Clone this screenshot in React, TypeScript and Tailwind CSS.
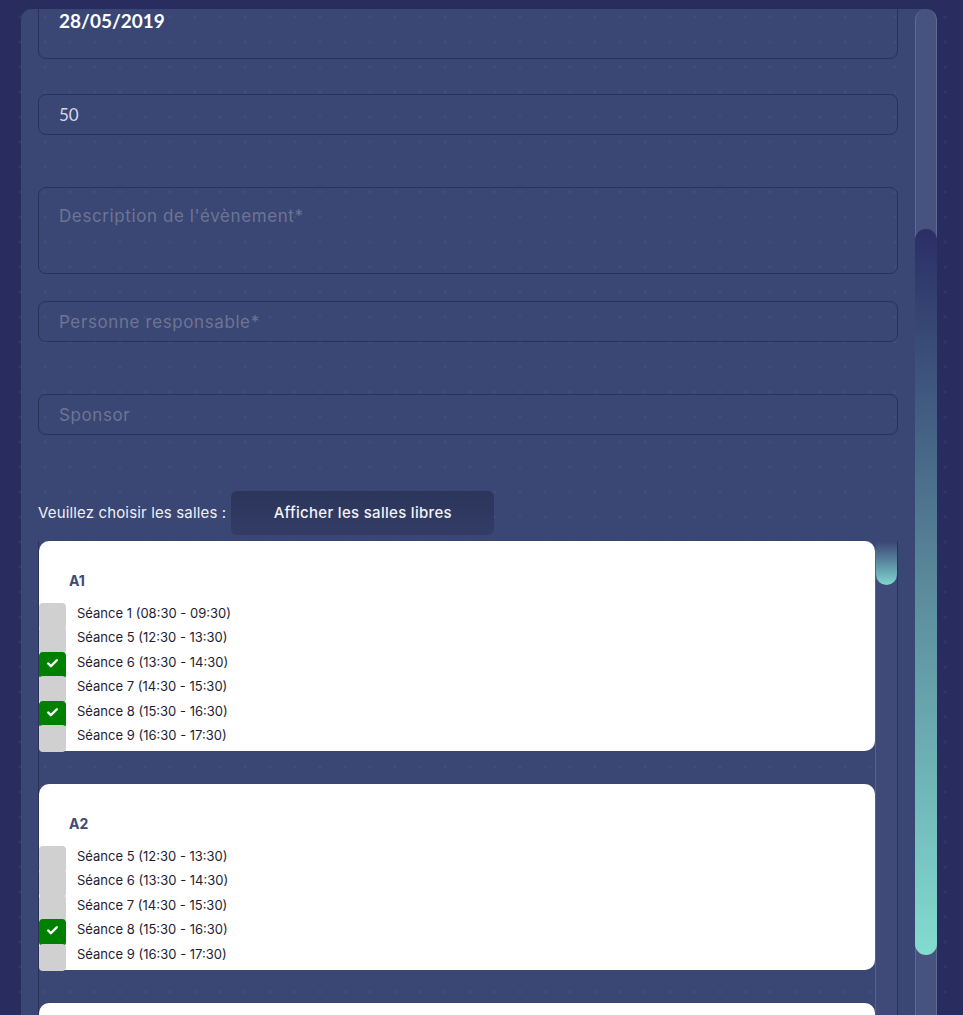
import { Check } from 'lucide-react';

const sans = "font-['Inter','Noto_Sans',sans-serif]";
const lato = "font-['Lato','Liberation_Sans',sans-serif]";

interface Slot {
  n: number;
  from: string;
  to: string;
  on?: boolean;
}

const rooms: { name: string; slots: Slot[] }[] = [
  {
    name: 'A1',
    slots: [
      { n: 1, from: '08:30', to: '09:30' },
      { n: 5, from: '12:30', to: '13:30' },
      { n: 6, from: '13:30', to: '14:30', on: true },
      { n: 7, from: '14:30', to: '15:30' },
      { n: 8, from: '15:30', to: '16:30', on: true },
      { n: 9, from: '16:30', to: '17:30' },
    ],
  },
  {
    name: 'A2',
    slots: [
      { n: 5, from: '12:30', to: '13:30' },
      { n: 6, from: '13:30', to: '14:30' },
      { n: 7, from: '14:30', to: '15:30' },
      { n: 8, from: '15:30', to: '16:30', on: true },
      { n: 9, from: '16:30', to: '17:30' },
    ],
  },
];

const RoomCard = ({ name, slots }: { name: string; slots: Slot[] }) => (
  <div className="rounded-[10px] bg-white pt-[30px] pb-[3px]">
    <div className={`${sans} pl-[30px] text-[14px] leading-[20px] font-bold text-[#3d4a75]`}>{name}</div>
    <div className="mt-[10px] flex flex-col">
      {slots.map((s) => (
        <div key={s.n} className="flex h-[24.5px] items-center">
          <span
            className={`mt-[6px] flex h-[27px] w-[27px] shrink-0 items-center justify-center rounded-[4px] ${
              s.on ? 'bg-[#008000]' : 'bg-[#d0d0d0]'
            }`}>
            {s.on && <Check size={13} strokeWidth={4.5} className="mb-[4px] text-white" />}
          </span>
          <span className={`${sans} ml-[11px] text-[13px] text-[#1d1d33]`}>
            Séance {s.n} ({s.from} - {s.to})
          </span>
        </div>
      ))}
    </div>
  </div>
);

const Field = ({ label, className }: { label: string; className: string }) => (
  <div className={`rounded-[8px] border border-[#2b3259] px-[20px] ${className}`}>
    <span className={`${sans} text-[17px] leading-[24px] tracking-[0.6px] text-[#6d7594]`}>{label}</span>
  </div>
);

export default function App() {
  return (
    <div className="h-[1015px] w-[963px] overflow-hidden bg-[#292c5f] bg-[radial-gradient(circle,rgba(255,255,255,0.06)_1px,transparent_1.6px)] bg-[length:25px_25px] bg-[position:7.5px_4.5px] bg-fixed">
      <div className="mt-[9px] ml-[21px] flex h-[1006px] w-[916px] overflow-hidden rounded-t-[10px] bg-[#3a4673] bg-[radial-gradient(circle,rgba(255,255,255,0.05)_1px,transparent_1.6px)] bg-[length:25px_25px] bg-[position:7.5px_4.5px] bg-fixed">
        <div className="flex-1 px-[17px]">
          <div className="-mt-[19px] h-[69px] rounded-[8px] border border-[#2b3259] px-[20px] pt-[18px]">
            <span className={`${lato} text-[19px] leading-[24px] font-bold text-white`}>28/05/2019</span>
          </div>
          <div className="mt-[35px] flex h-[41px] items-center rounded-[8px] border border-[#2b3259] px-[20px]">
            <span className={`${lato} text-[17px] text-[#d6d9e4]`}>50</span>
          </div>
          <Field label="Description de l'évènement*" className="mt-[52px] h-[87px] pt-[16px]" />
          <Field label="Personne responsable*" className="mt-[27px] flex h-[41px] items-center" />
          <Field label="Sponsor" className="mt-[52px] flex h-[41px] items-center" />

          <div className="mt-[56px] flex h-[44px] items-center">
            <span className={`${sans} text-[15px] tracking-[0.15px] text-[#eef0f6]`}>Veuillez choisir les salles :</span>
            <button
              className={`${sans} ml-[5px] h-[44px] w-[263px] rounded-[6px] bg-linear-to-b from-[#2c355a] to-[#323c66] text-[15px] font-medium tracking-[0.3px] text-[#f2f3f8]`}>
              Afficher les salles libres
            </button>
          </div>

          <div className="mt-[6px] flex border-r border-l border-[#2b3259]">
            <div className="flex flex-1 flex-col gap-[33px]">
              {rooms.map((r) => (
                <RoomCard key={r.name} name={r.name} slots={r.slots} />
              ))}
              <div className="h-[120px] rounded-[10px] bg-white" />
            </div>
            <div className="w-[22px] rounded-t-[10px] border-l border-[#56618c] bg-[#3f4a78]">
              <div className="h-[44px] rounded-t-[8px] rounded-b-full bg-linear-to-b from-[#3a4474] to-[#7fd8cf]" />
            </div>
          </div>
        </div>

        <div className="w-[22px] shrink-0 rounded-t-full border-x border-[#5f6a93] bg-[#47527e]">
          <div className="-mx-px mt-[220px] h-[726px] rounded-full bg-linear-to-b from-[#2b2e66] via-[#5b8c9c] to-[#83dcd0]" />
        </div>
      </div>
    </div>
  );
}
